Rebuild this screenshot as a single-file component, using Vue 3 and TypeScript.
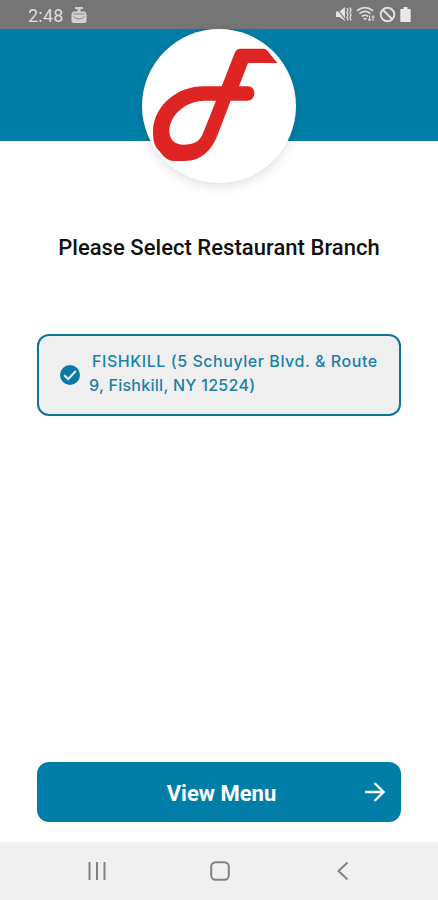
<script setup lang="ts">
import { ref } from 'vue'

interface Branch {
  id: number
  lines: string[]
}

const time = '2:48'
const branches: Branch[] = [
  { id: 1, lines: ['FISHKILL (5 Schuyler Blvd. & Route', '9, Fishkill, NY 12524)'] },
]
const selected = ref<number>(1)
</script>

<template>
  <div class="screen">
    <div class="status">
      <span class="time">{{ time }}</span>
      <svg class="notice" viewBox="0 0 16 18" aria-hidden="true">
        <path d="M4 1h8v2H9.500v3h-3V3H4z" fill="#d2d2d2" />
        <path d="M2 5.500h12l1.500 3v7L14 17H2L.5 15.500v-7z" fill="#d2d2d2" />
        <path d="M2.500 8h11M2.500 10.500q5.500 5 11 0" fill="none" stroke="#858585" stroke-width="1" />
      </svg>
      <div class="system">
        <svg width="17" height="17" viewBox="0 0 17 17" aria-hidden="true">
          <path d="M1 5.500h3.500L10 1v14l-5.500-4H1z" fill="#e2e2e2" />
          <path d="M1 1.500l10 13" stroke="#777" stroke-width="1.200" />
          <path d="M12 2l1 2-1 2.500 1 2.500-1 2.500 1 3M15 1.500l1 2.500-1 2.500 1 2.500-1 2.500 1 3" fill="none" stroke="#dedede" stroke-width="1.400" />
        </svg>
        <svg width="19" height="17" viewBox="0 0 19 17" aria-hidden="true">
          <path d="M1 4.700Q9 -1.300 17 4.700M3.400 7.700Q9 3.200 14.600 7.700M5.800 10.500Q9 8 12.200 10.500" fill="none" stroke="#dedede" stroke-width="1.700" />
          <path d="M7 12h4l-2 2.500z" fill="#dedede" />
          <path d="M13.500 9.500v5M12 13l1.500 2 1.500-2M17 15v-5M15.500 11.500L17 9.500l1.500 2" fill="none" stroke="#dedede" stroke-width="1" />
        </svg>
        <svg width="17" height="17" viewBox="0 0 17 17" aria-hidden="true">
          <circle cx="8.500" cy="8.500" r="6.800" fill="none" stroke="#e0e0e0" stroke-width="2" />
          <path d="M3.700 3.700l9.600 9.600" stroke="#e0e0e0" stroke-width="2" />
        </svg>
        <svg width="11" height="17" viewBox="0 0 11 17" aria-hidden="true">
          <path d="M3.500 1h4v2H10q.7 0 .7.700v11.600q0 .7-.7.700H1q-.7 0-.7-.7V3.700Q.3 3 1 3h2.500z" fill="#e8e8e8" />
        </svg>
      </div>
    </div>

    <header class="banner">
      <div class="logo">
        <svg viewBox="36 27 462 462" role="img" aria-label="Restaurant logo">
          <path class="stem" fill-rule="evenodd" d="M332 86H400Q408 86 413 93L442 129H354L327 199H353C381 199 380 242 350 242H302L263 344C244 394 212 422 164 423H132Q115 423 101 409L83 388C71 373 69 357 69 330C74 255 142 199 221 199H275L315 97Q320 86 332 86ZM258 242H223C166 243 119 286 118 332C118 359 136 374 160 374C192 373 207 365 217 345Z" />
        </svg>
      </div>
    </header>

    <main class="content">
      <h1>Please Select Restaurant Branch</h1>
      <button
        v-for="branch in branches"
        :key="branch.id"
        class="branch"
        type="button"
        @click="selected = branch.id"
      >
        <svg class="check" viewBox="0 0 20 20" aria-hidden="true">
          <circle cx="10" cy="10" r="10" fill="#087aa5" />
          <path v-if="selected === branch.id" d="M4.200 10.200l4 3.800 7.600-8" fill="none" stroke="#f4f8fa" stroke-width="2" />
        </svg>
        <span class="address">
          <span v-for="(line, i) in branch.lines" :key="i" class="line">{{ line }}</span>
        </span>
      </button>
    </main>

    <button class="view" type="button">
      <span>View Menu</span>
      <svg class="arrow" viewBox="0 0 20 20" aria-hidden="true">
        <path d="M0 10h18.500M9.500 1l9 9-9 9" fill="none" stroke="#fff" stroke-width="2.300" />
      </svg>
    </button>

    <nav class="navbar">
      <svg viewBox="0 0 20 20" aria-hidden="true"><path d="M2.500 1v18M10 1v18M17.500 1v18" /></svg>
      <svg viewBox="0 0 20 20" aria-hidden="true"><rect x="1.200" y="1.200" width="17.600" height="17.600" rx="4.500" /></svg>
      <svg viewBox="0 0 20 20" aria-hidden="true"><path d="M14.500 1.500L5.500 10l9 8.500" /></svg>
    </nav>
  </div>
</template>

<style>
body {
  margin: 0;
}
</style>

<style scoped>
.screen {
  display: flex;
  flex-direction: column;
  height: 900px;
  background: #fff;
  font-family: Roboto, sans-serif;
}
button {
  margin: 0;
  font: inherit;
  box-sizing: border-box;
}
svg {
  display: block;
  flex: none;
}
.status {
  display: flex;
  align-items: center;
  height: 29px;
  padding: 0 27px 0 28px;
  background: #757575;
}
.time {
  width: 36px;
  color: #dedede;
  font-size: 18px;
  line-height: 29px;
  padding-top: 1px;
  letter-spacing: 0.2px;
}
.notice {
  width: 16px;
  height: 18px;
  margin-left: 7px;
}
.system {
  display: flex;
  gap: 4px;
  margin-left: auto;
}
.banner {
  display: flex;
  justify-content: center;
  height: 112px;
  background: #007ea8;
}
.logo {
  width: 154px;
  height: 154px;
  border-radius: 50%;
  background: #fff;
  box-shadow: 0 3px 12px rgba(0, 0, 0, 0.13);
}
.stem {
  fill: #df2523;
}
.content {
  flex: 1;
  padding: 93px 37px 0;
}
h1 {
  margin: 0 0 73px;
  color: #111;
  font-size: 22px;
  font-weight: 500;
  letter-spacing: 0.040px;
  line-height: 27px;
  text-align: center;
  white-space: nowrap;
}
.branch {
  display: flex;
  align-items: center;
  width: 364px;
  height: 82px;
  padding: 0 0 0 21px;
  border: 2px solid #10739c;
  border-radius: 12px;
  background: #efefef;
  color: #1c80a8;
  text-align: left;
}
.check {
  width: 20px;
  height: 20px;
}
.address {
  margin-left: 9px;
  padding-bottom: 4px;
  font-family: Inter, sans-serif;
  font-size: 16px;
  font-weight: 500;
  line-height: 24px;
}
.line {
  display: block;
  letter-spacing: 0.280px;
  white-space: nowrap;
}
.line:first-child {
  padding-left: 3px;
  letter-spacing: 0.550px;
}
.view {
  display: grid;
  grid-template-columns: 1fr auto 1fr;
  align-items: center;
  width: 364px;
  height: 60px;
  margin: 0 37px 20px;
  padding: 0 16px 0 21px;
  border: 0;
  border-radius: 12px;
  background: #007ea8;
  color: #fff;
  font-size: 22px;
  font-weight: 700;
}
.view span {
  grid-column: 2;
  padding-top: 3px;
}
.arrow {
  width: 20px;
  height: 20px;
  justify-self: end;
}
.navbar {
  display: flex;
  align-items: center;
  justify-content: space-between;
  height: 58px;
  padding: 0 85px 0 87px;
  background: #f0f0f0;
}
.navbar svg {
  width: 20px;
  height: 20px;
  fill: none;
  stroke: #828282;
  stroke-width: 2;
}
</style>
